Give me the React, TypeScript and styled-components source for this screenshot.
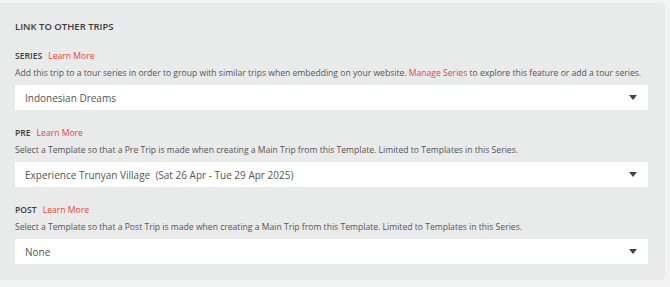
import styled, { createGlobalStyle } from "styled-components";

const GlobalStyle = createGlobalStyle`
  html, body {
    margin: 0;
    padding: 0;
    background: #f3f3f3;
  }
  body {
    font-family: "Open Sans", "Liberation Sans", sans-serif;
  }
`;

const Panel = styled.section`
  margin-top: 3px;
  width: 665px;
  box-sizing: border-box;
  padding: 17px 17px 16px 15px;
  background: #e9eaea;
  border-radius: 0 5px 5px 0;
`;

const Title = styled.h3`
  margin: 0 0 15px;
  font-size: 9.5px;
  line-height: 14px;
  font-weight: 600;
  color: #3c3c3c;
  text-transform: uppercase;
`;

const Field = styled.div`
  & + & {
    margin-top: 16px;
  }
`;

const Label = styled.div`
  display: flex;
  align-items: baseline;
  gap: 6px;
  font-size: 8.6px;
  line-height: 14px;
`;

const LabelName = styled.span`
  font-weight: 600;
  color: #3c3c3c;
  text-transform: uppercase;
`;

const RedLink = styled.a`
  color: #e8453c;
  text-decoration: none;
  cursor: pointer;
`;

const Help = styled.p`
  margin: 3px 0 5px;
  font-size: 8.6px;
  line-height: 14px;
  color: #555;
  white-space: nowrap;
`;

const SelectBox = styled.div`
  height: 25px;
  display: flex;
  align-items: center;
  justify-content: space-between;
  padding: 0 11px 0 10px;
  background: #fff;
  font-size: 10px;
  color: #555;
`;

const Arrow = styled.span`
  width: 0;
  height: 0;
  border-left: 4px solid transparent;
  border-right: 4px solid transparent;
  border-top: 5px solid #444;
`;

type Trip = {
  name: string;
  help: React.ReactNode;
  value: string;
};

const fields: Trip[] = [
  {
    name: "Series",
    help: (
      <>
        Add this trip to a tour series in order to group with similar trips when
        embedding on your website. <RedLink>Manage Series</RedLink> to explore
        this feature or add a tour series.
      </>
    ),
    value: "Indonesian Dreams",
  },
  {
    name: "Pre",
    help: "Select a Template so that a Pre Trip is made when creating a Main Trip from this Template. Limited to Templates in this Series.",
    value: "Experience Trunyan Village\u00a0\u00a0(Sat 26 Apr - Tue 29 Apr 2025)",
  },
  {
    name: "Post",
    help: "Select a Template so that a Post Trip is made when creating a Main Trip from this Template. Limited to Templates in this Series.",
    value: "None",
  },
];

export default function App() {
  return (
    <>
      <GlobalStyle />
      <Panel>
        <Title>Link to other trips</Title>
        {fields.map((f) => (
          <Field key={f.name}>
            <Label>
              <LabelName>{f.name}</LabelName>
              <RedLink>Learn More</RedLink>
            </Label>
            <Help>{f.help}</Help>
            <SelectBox>
              <span>{f.value}</span>
              <Arrow />
            </SelectBox>
          </Field>
        ))}
      </Panel>
    </>
  );
}
